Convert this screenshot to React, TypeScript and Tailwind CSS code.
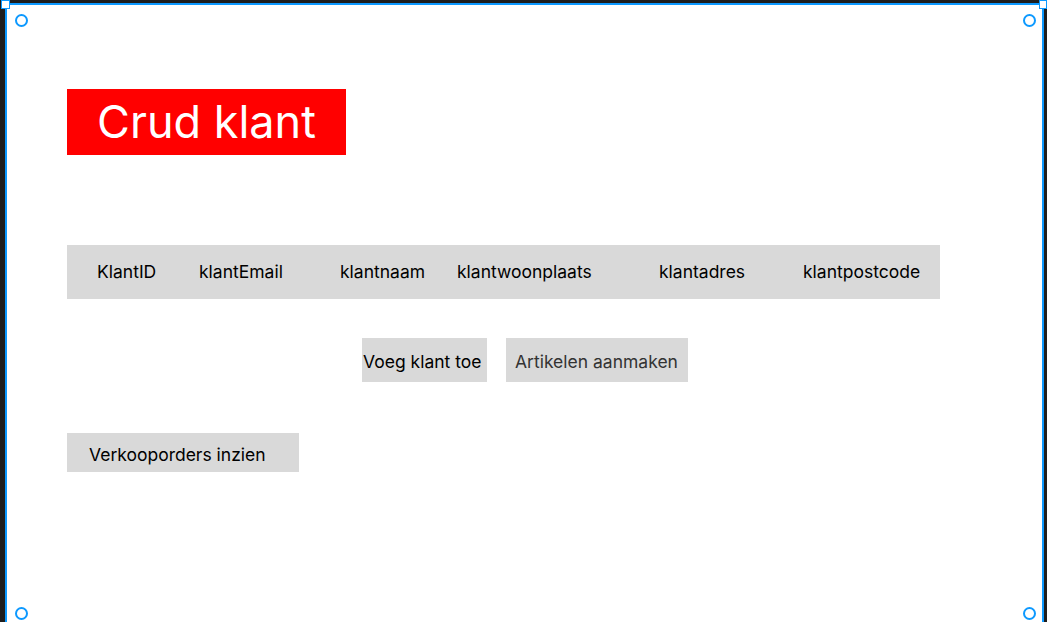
const COLUMNS = [
  { label: "KlantID", w: "w-[102px]" },
  { label: "klantEmail", w: "w-[141px]" },
  { label: "klantnaam", w: "w-[117px]" },
  { label: "klantwoonplaats", w: "w-[202px]" },
  { label: "klantadres", w: "w-[144px]" },
  { label: "klantpostcode", w: "w-[120px]" },
];

// selection handle circle (figma-ish)
function Dot({ pos }: { pos: string }) {
  return <div className={`absolute ${pos} w-[13px] h-[13px] rounded-full border-2 border-[#0d99ff] bg-white`} />;
}

export default function App() {
  return (
    <div className="relative w-[1047px] h-[622px] overflow-hidden bg-[#1e1e1e] pt-[3px] pl-[5px] pr-[3px] font-['Inter',sans-serif]">
      <div className="h-[660px] border-2 border-[#0d99ff] bg-white">
        <div className="ml-[60px] mt-[84px] flex h-[66px] w-[279px] items-center justify-center bg-[#ff0000] text-[45px] text-white">
          Crud klant
        </div>

        <div className="ml-[60px] mt-[90px] flex h-[54px] w-[873px] items-center bg-[#d9d9d9] pl-[30px] text-[17.5px] text-black">
          {COLUMNS.map((c) => (
            <span key={c.label} className={c.w}>
              {c.label}
            </span>
          ))}
        </div>

        <div className="mt-[39px] ml-[355px] flex gap-[19px]">
          <button className="flex h-[44px] w-[125px] items-center bg-[#d9d9d9] pl-px pt-[5px] text-[17.5px] text-black">
            Voeg klant toe
          </button>
          <button className="flex h-[44px] w-[182px] items-center bg-[#d9d9d9] pl-[9px] pt-[5px] text-[17.5px] text-[#333]">
            Artikelen aanmaken
          </button>
        </div>

        <button className="ml-[60px] mt-[51px] flex h-[39px] w-[232px] items-center bg-[#d9d9d9] pl-[22px] pt-[6px] text-[17.5px] text-black">
          Verkooporders inzien
        </button>
      </div>

      {/* corner handles */}
      <div className="absolute left-px top-0 h-[9px] w-[9px] border-[1.5px] border-[#0d99ff] bg-white" />
      <div className="absolute right-0 top-0 h-[9px] w-[8px] border-[1.5px] border-[#0d99ff] bg-white" />
      <Dot pos="left-[15px] top-[14px]" />
      <Dot pos="left-[1023px] top-[14px]" />
      <Dot pos="left-[15px] top-[607px]" />
      <Dot pos="left-[1023px] top-[607px]" />
    </div>
  );
}
